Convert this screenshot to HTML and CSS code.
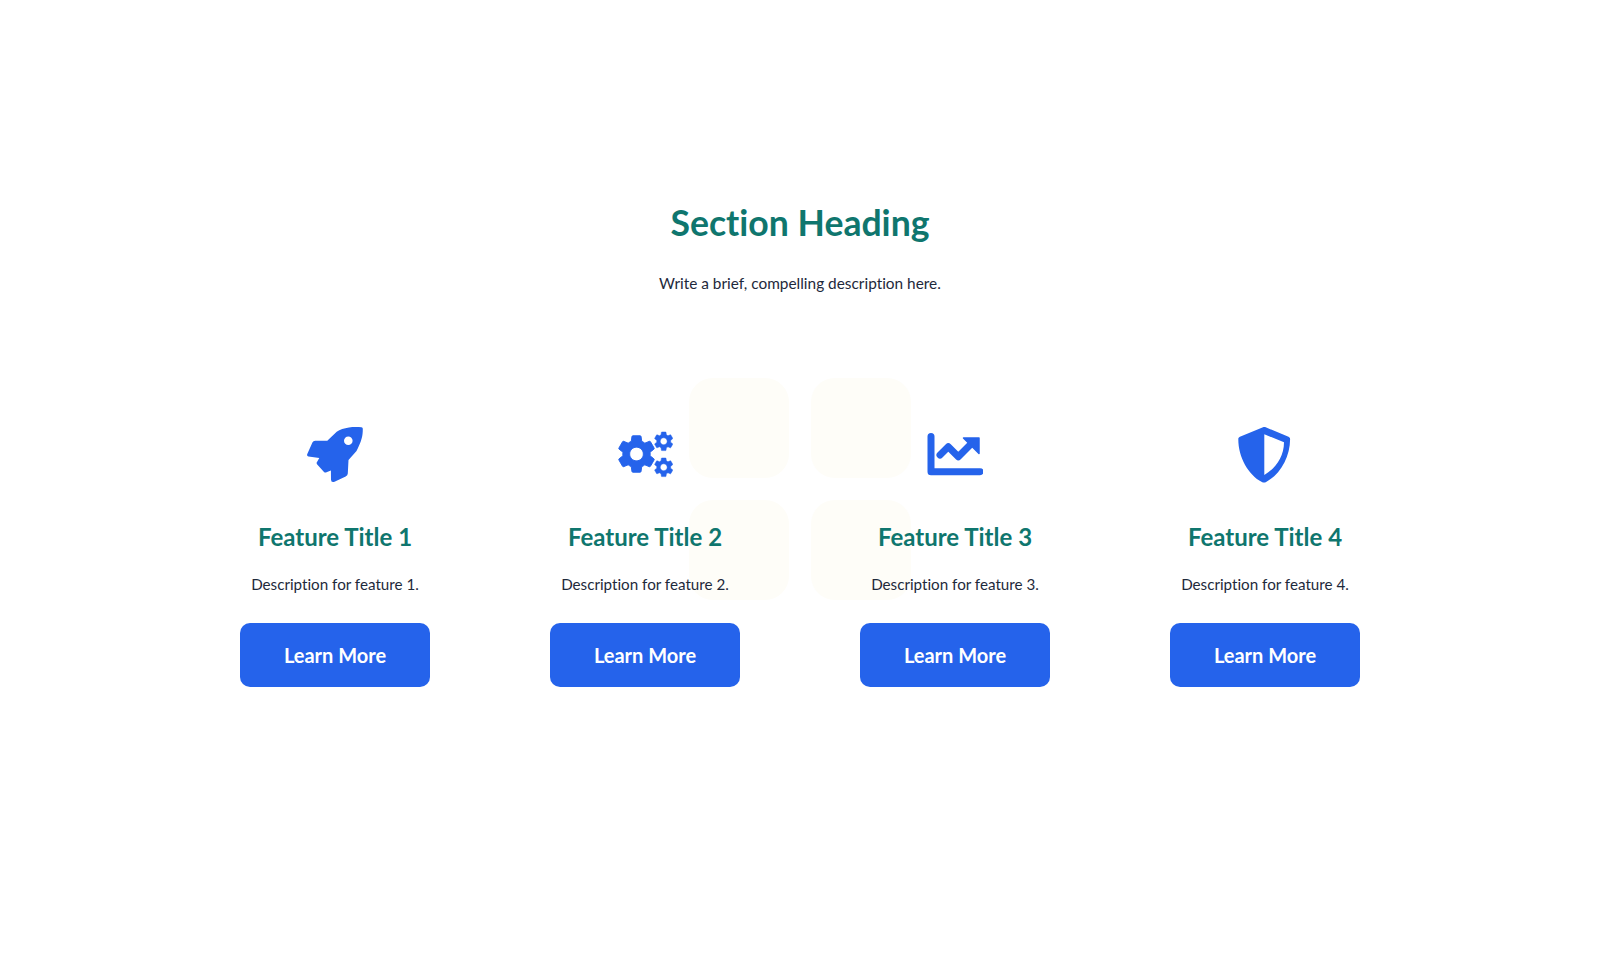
FILE: index.html
```html
<!DOCTYPE html>
<html lang="en">
<head>
  <meta charset="UTF-8">
  <meta name="viewport" content="width=device-width, initial-scale=1.0">
  <title>Section Heading</title>
  <link rel="stylesheet" href="styles.css">
</head>
<body>

  <svg class="defs" width="0" height="0" aria-hidden="true">
    <symbol id="gear" viewBox="2 2 20 20" overflow="visible">
      <path class="gear-shape" fill-rule="evenodd" d="M19.14 12.94c.04-.3.06-.61.06-.94 0-.32-.02-.64-.07-.94l2.03-1.58c.18-.14.23-.41.12-.61l-1.92-3.32c-.12-.22-.37-.29-.59-.22l-2.39.96c-.5-.38-1.03-.7-1.62-.94l-.36-2.54c-.04-.24-.24-.41-.48-.41h-3.84c-.24 0-.43.17-.47.41l-.36 2.54c-.59.24-1.13.57-1.62.94l-2.39-.96c-.22-.08-.47 0-.59.22L2.74 8.87c-.12.21-.08.47.12.61l2.03 1.58c-.05.3-.09.63-.09.94s.02.64.07.94l-2.03 1.58c-.18.14-.23.41-.12.61l1.92 3.32c.12.22.37.29.59.22l2.39-.96c.5.38 1.03.7 1.62.94l.36 2.54c.05.24.24.41.48.41h3.84c.24 0 .44-.17.47-.41l.36-2.54c.59-.24 1.13-.56 1.62-.94l2.39.96c.22.08.47 0 .59-.22l1.92-3.32c.12-.22.07-.47-.12-.61l-2.01-1.58zM12 15.6c-1.98 0-3.6-1.62-3.6-3.6s1.62-3.6 3.6-3.6 3.6 1.62 3.6 3.6-1.62 3.6-3.6 3.6z"/>
    </symbol>
  </svg>

  <div class="decor">
    <span></span><span></span><span></span><span></span>
  </div>

  <section class="features">
    <h2>Section Heading</h2>
    <p class="lead">Write a brief, compelling description here.</p>

    <div class="feature-grid">
      <div class="feature">
        <svg class="icon" viewBox="0 0 56 56">
          <path fill-rule="evenodd" d="M42 .6C46-.2 51 0 54.5.3Q55.8.4 55.8 1.8C55.8 6 55.5 8.5 54.7 11.3C53.5 16 51.5 20 49.5 24L41.5 33L40.8 46.5Q40.7 48.6 38.7 49.6L27.5 54.8Q24 56 24 52.5L23.9 43.5L19.5 45.3Q18 45.9 17 44.9L10 37.3Q9.2 36.100 10 34.900L12.300 31L1.500 29.600Q-.5 29 .3 27L5.400 15.500Q6.200 13.700 8.200 13.700H20.300L29.700 4.700C33 2.500 37 1.400 42 .6ZM41.300 9.400a4.300 4.300 0 1 0 0 8.600a4.300 4.300 0 1 0 0-8.600Z"/>
        </svg>
        <h3>Feature Title 1</h3>
        <p>Description for feature 1.</p>
        <button class="button">Learn More</button>
      </div>

      <div class="feature">
        <svg class="icon" viewBox="0 0 56 56">
          <use href="#gear" x="0.5" y="8" width="38" height="38"/>
          <use href="#gear" x="37" y="4.6" width="19.4" height="19.4"/>
          <use href="#gear" x="37" y="30.6" width="19.4" height="19.4"/>
        </svg>
        <h3>Feature Title 2</h3>
        <p>Description for feature 2.</p>
        <button class="button">Learn More</button>
      </div>

      <div class="feature">
        <svg class="icon" viewBox="0 0 56 56">
          <path class="line" d="M4 9.6V44.7H53"/>
          <path class="line" d="M13 28L21.3 19.7L31.3 29.7L44 17"/>
          <path class="head" d="M36.5 11H52V26.5Z"/>
        </svg>
        <h3>Feature Title 3</h3>
        <p>Description for feature 3.</p>
        <button class="button">Learn More</button>
      </div>

      <div class="feature">
        <svg class="icon" viewBox="0 0 56 56">
          <path fill-rule="evenodd" d="M26 .3c.9-.4 1.8-.4 2.7 0l22.8 9.5c1 .4 1.6 1.3 1.6 2.4 0 18-10.3 35.6-24 42.8-1.4.7-2.8.7-4.2 0C11.200 47.800 1.300 30.200 1.300 12.200c0-1.100.6-2 1.600-2.400zM27.300 7.300V48C38 42 47 30 47 15.300z"/>
        </svg>
        <h3>Feature Title 4</h3>
        <p>Description for feature 4.</p>
        <button class="button">Learn More</button>
      </div>
    </div>
  </section>

</body>
</html>
```

FILE: styles.css
```css
body {
  font-family: 'Lato', sans-serif;
  font-variant-ligatures: none;
  background-color: #fff;
  color: #1e293b;
  margin: 0;
  padding: 0;
  height: 100vh;
  overflow: hidden;
}
.defs {
  position: absolute;
}
/* faint squares behind the content */
.decor {
  position: absolute;
  top: 378px;
  left: 689px;
  display: grid;
  grid-template-columns: 100px 100px;
  grid-auto-rows: 100px;
  gap: 22px;
}
.decor span {
  background-color: #fefdf8;
  border-radius: 24px;
}
.features {
  position: relative;
  width: 1200px;
  margin: 0 auto;
  padding-top: 196px;
  text-align: center;
}
h2 {
  color: #0f766e;
  font-size: 35.6px;
  line-height: 54px;
  font-weight: 700;
  margin: 0 0 21px;
}
.lead {
  font-size: 15.4px;
  line-height: 24px;
  margin: 0 0 132px;
}
.feature-grid {
  display: grid;
  grid-template-columns: repeat(4, 1fr);
  gap: 40px;
}
.feature {
  display: flex;
  flex-direction: column;
  align-items: center;
}
.icon {
  display: block;
  width: 56px;
  height: 56px;
  fill: #2563eb;
}
.icon .line {
  fill: none;
  stroke: #2563eb;
  stroke-width: 7;
  stroke-linecap: round;
  stroke-linejoin: round;
}
.icon .head {
  stroke: #2563eb;
  stroke-width: 1.5;
  stroke-linejoin: round;
}
.gear-shape {
  stroke: #2563eb;
  stroke-width: 0.5;
  stroke-linejoin: round;
}
h3 {
  color: #0f766e;
  font-size: 24px;
  line-height: 36px;
  font-weight: 700;
  margin: 36px 0 17px;
}
.feature p {
  font-size: 15.2px;
  line-height: 24px;
  margin: 0 0 27px;
}
.button {
  background-color: #2563eb;
  color: #fff;
  border: none;
  width: 190px;
  height: 64px;
  border-radius: 10px;
  font-family: inherit;
  font-size: 20px;
  font-weight: 700;
  cursor: pointer;
}
```
